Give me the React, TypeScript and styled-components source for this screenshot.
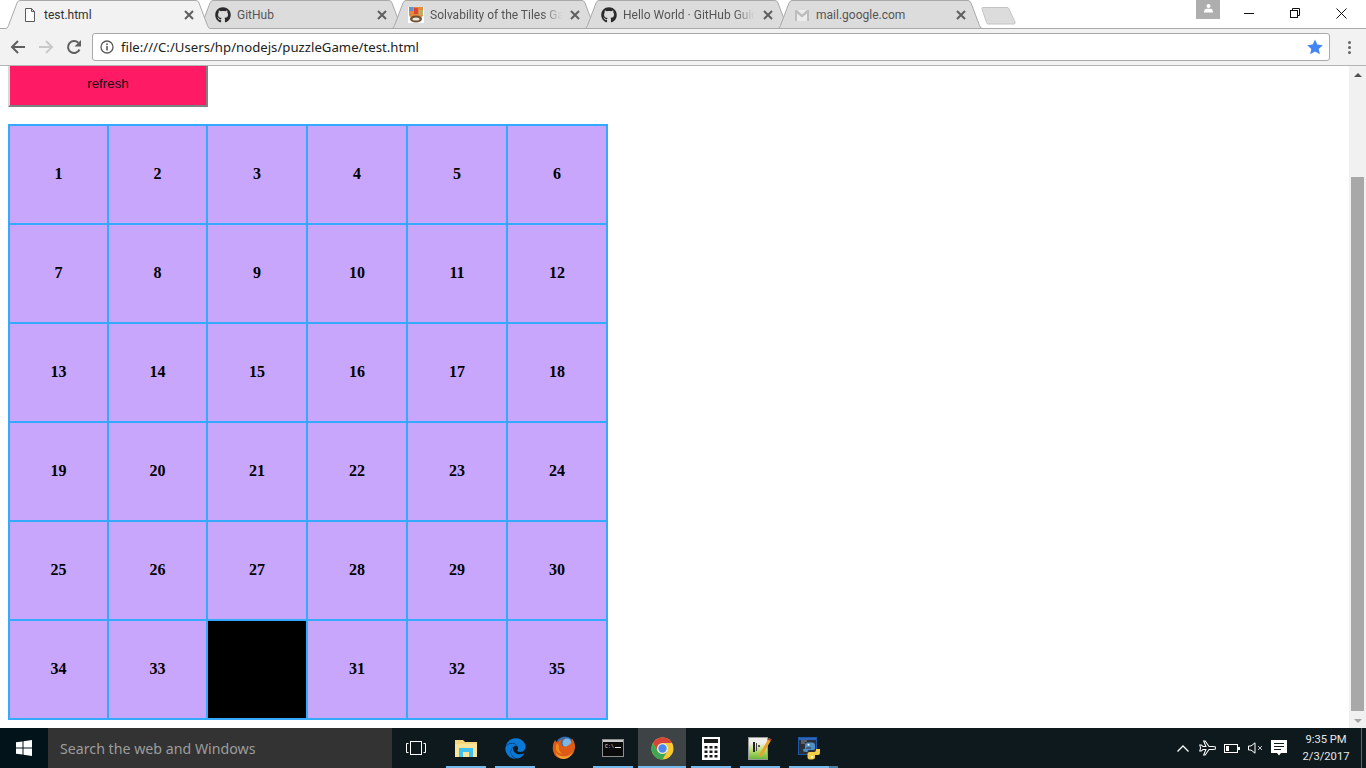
import React from "react";
import styled, { createGlobalStyle } from "styled-components";
import { FaGithub, FaEdge } from "react-icons/fa";

const Global = createGlobalStyle`
  html, body { margin: 0; padding: 0; height: 100%; overflow: hidden; background: #fff; }
  #root { height: 100%; }
`;

const UI = `"Noto Sans", "Open Sans", sans-serif`;
const UI_SMALL = `Roboto, "Noto Sans", sans-serif`;

const Page = styled.div`
  width: 1366px;
  height: 768px;
  display: flex;
  flex-direction: column;
  overflow: hidden;
  background: #fff;
`;

/* ---------- tab strip ---------- */
const TabStrip = styled.div`
  height: 29px;
  box-sizing: border-box;
  border-bottom: 1px solid #a9a9a9;
  display: flex;
  padding-left: 6px;
  background: #fff;
`;
const TabShape = styled.svg`
  position: absolute;
  left: 0;
  top: 0;
  width: 204px;
  height: 29px;
`;
const TabBox = styled.div<{ $active?: boolean }>`
  position: relative;
  z-index: ${(p) => (p.$active ? 2 : 1)};
  width: 204px;
  height: 28px;
  flex: none;
  margin-right: -11px;
  display: flex;
  align-items: center;
  padding-left: 16px;
  box-sizing: border-box;
  font: 12px/16px ${UI_SMALL};
  color: ${(p) => (p.$active ? "#2f2f2f" : "#555")};
`;
const TabIcon = styled.span`
  position: relative;
  width: 16px;
  height: 16px;
  flex: none;
  display: flex;
  margin-right: 6px;
  margin-top: 2px;
`;
const TabTitle = styled.span<{ $fade?: boolean }>`
  position: relative;
  width: 132px;
  flex: none;
  white-space: nowrap;
  overflow: hidden;
  margin-top: 2px;
  ${(p) =>
    p.$fade
      ? "-webkit-mask-image: linear-gradient(to right, #000 112px, transparent 132px); mask-image: linear-gradient(to right, #000 112px, transparent 132px);"
      : ""}
`;
const TabClose = styled.svg`
  position: relative;
  margin-left: 8px;
  margin-top: 2px;
  width: 10px;
  height: 10px;
  flex: none;
`;
const NewTab = styled.svg`
  margin-left: 10px;
  margin-top: 7px;
  width: 35px;
  height: 18px;
  flex: none;
`;
const WindowControls = styled.div`
  margin-left: auto;
  display: flex;
  align-items: flex-start;
  height: 28px;
  padding-right: 2px;
`;
const Avatar = styled.div`
  width: 24px;
  height: 19px;
  background: #aeaeae;
  display: flex;
  justify-content: center;
  margin-right: 6px;
`;
const WinBtn = styled.div`
  width: 46px;
  height: 26px;
  display: flex;
  align-items: center;
  justify-content: center;
`;

/* ---------- toolbar ---------- */
const Toolbar = styled.div`
  height: 36px;
  box-sizing: content-box;
  border-bottom: 1px solid #b4b4b4;
  background: #f2f2f2;
  display: flex;
  align-items: center;
  padding-left: 4px;
`;
const NavBtn = styled.div`
  width: 28px;
  height: 28px;
  display: flex;
  align-items: center;
  justify-content: center;
  flex: none;
`;
const Omnibox = styled.div`
  flex: 1;
  height: 28px;
  margin-left: 4px;
  box-sizing: border-box;
  border: 1px solid #a9a9a9;
  border-radius: 3px;
  background: #fff;
  display: flex;
  align-items: center;
  padding: 0 6px 0 7px;
  font: 13.2px/18px ${UI};
  color: #222;
`;
const OmniText = styled.span`
  margin-left: 7px;
  flex: 1;
  white-space: nowrap;
`;
const MenuBtn = styled.div`
  width: 36px;
  flex: none;
  display: flex;
  flex-direction: column;
  align-items: center;
  gap: 2px;
  padding-left: 2px;
  box-sizing: border-box;
`;
const MenuDot = styled.i`
  width: 3px;
  height: 3px;
  border-radius: 50%;
  background: #666;
  display: block;
`;

/* ---------- page area ---------- */
const Viewport = styled.div`
  flex: 1;
  min-height: 0;
  display: flex;
  overflow: hidden;
`;
const Content = styled.div`
  flex: 1;
  padding-left: 8px;
  overflow: hidden;
`;
const RefreshButton = styled.button`
  display: block;
  width: 200px;
  height: 48px;
  margin: -7px 0 17px;
  padding: 0;
  box-sizing: border-box;
  border-width: 2px;
  border-style: solid;
  border-color: #d8d8d8 #808080 #808080 #d8d8d8;
  background: #ff1a66;
  color: #111;
  font: 13.33px "Liberation Sans", Arial, sans-serif;
`;
const Board = styled.div`
  width: 600px;
  height: 596px;
  box-sizing: border-box;
  border: 1px solid #33aaff;
  display: grid;
  grid-template-columns: 99px 99px 100px 100px 100px 100px;
  grid-template-rows: repeat(6, 99px);
`;
const Tile = styled.div<{ $empty?: boolean }>`
  box-sizing: border-box;
  border: 1px solid #33aaff;
  background: ${(p) => (p.$empty ? "#000" : "#c8a6fc")};
  display: flex;
  align-items: center;
  justify-content: center;
  padding-bottom: 1px;
  font: bold 16px "Liberation Serif", "Times New Roman", serif;
  color: #000;
`;
const Scrollbar = styled.div`
  width: 17px;
  flex: none;
  background: #f1f1f1;
  display: flex;
  flex-direction: column;
`;
const ScrollArrow = styled.div<{ $up?: boolean }>`
  height: 17px;
  flex: none;
  display: flex;
  align-items: center;
  justify-content: center;
  &::before {
    content: "";
    display: block;
    border-left: 4px solid transparent;
    border-right: 4px solid transparent;
    ${(p) =>
      p.$up
        ? "border-bottom: 4px solid #505050;"
        : "border-top: 4px solid #a3a3a3; margin-top: 2px;"}
  }
`;
const ScrollTrack = styled.div`
  flex: 1;
  padding: 94px 2px 0;
`;
const ScrollThumb = styled.div`
  height: 534px;
  background: #a8a8a8;
`;

/* ---------- taskbar ---------- */
const Taskbar = styled.div`
  height: 40px;
  flex: none;
  background: #0d191d;
  display: flex;
  align-items: stretch;
`;
const StartBtn = styled.div`
  width: 48px;
  flex: none;
  background: #02141a;
  display: flex;
  align-items: center;
  justify-content: center;
`;
const SearchBox = styled.div`
  width: 344px;
  flex: none;
  background: #333;
  box-sizing: border-box;
  padding-left: 12px;
  display: flex;
  align-items: center;
  font: 14.2px ${UI};
  color: #9c9c9c;
`;
const TaskView = styled.div`
  width: 50px;
  flex: none;
  display: flex;
  align-items: center;
  justify-content: center;
  padding-right: 2px;
  box-sizing: border-box;
`;
const Slot = styled.div<{ $running?: boolean; $active?: boolean; $stacked?: boolean }>`
  position: relative;
  width: 48px;
  margin-right: 1px;
  flex: none;
  display: flex;
  align-items: center;
  justify-content: center;
  background: ${(p) => (p.$active ? "#3e4446" : "transparent")};
  ${(p) =>
    p.$running
      ? `&::after {
        content: "";
        position: absolute;
        bottom: 0;
        height: 2px;
        left: ${p.$active ? "0" : "4px"};
        right: ${p.$active ? "0" : "4px"};
        background: #76b9ed;
      }`
      : ""}
  ${(p) =>
    p.$stacked
      ? `&::before {
        content: "";
        position: absolute;
        bottom: 0;
        height: 2px;
        left: 44px;
        width: 9px;
        background: #4a7fa5;
      }`
      : ""}
`;
const Tray = styled.div`
  margin-left: auto;
  display: flex;
  align-items: center;
`;
const TrayIcon = styled.div<{ $w: number }>`
  width: ${(p) => p.$w}px;
  flex: none;
  display: flex;
  align-items: center;
  justify-content: center;
`;
const Clock = styled.div`
  width: 68px;
  flex: none;
  text-align: center;
  font: 11.2px/17px ${UI_SMALL};
  color: #e8e8e8;
`;
const ShowDesktop = styled.div`
  width: 1px;
  height: 100%;
  background: #5d6568;
  margin: 0 4px 0 1px;
`;

/* ---------- drawings ---------- */
const CloseGlyph = () => (
  <TabClose viewBox="0 0 10 10">
    <path d="M1 1 L9 9 M9 1 L1 9" stroke="#5f5f5f" strokeWidth="2" />
  </TabClose>
);

const DocIcon = () => (
  <svg width="16" height="16" viewBox="0 0 16 16">
    <path d="M3.500 1.500 H9.500 L12.500 4.500 V14.500 H3.500 Z M9.500 1.500 V4.500 H12.500" fill="#fff" stroke="#5a5a5a" />
  </svg>
);

const CrestIcon = () => (
  <svg width="16" height="16" viewBox="0 0 16 16">
    <rect width="16" height="16" fill="#fff" />
    <path d="M1 0 H15 V8 Q15 11 8 11 Q1 11 1 8 Z" fill="#e58a3c" />
    <path d="M1 0 H5 V4 H1 Z" fill="#6a8fc7" />
    <path d="M6 1 H10 V7 H6 Z" fill="#d8473a" />
    <path d="M11 3 H15 V8 H11 Z" fill="#b5b06a" />
    <ellipse cx="8" cy="12" rx="6" ry="3.400" fill="#6d5236" />
    <ellipse cx="8" cy="12" rx="3.600" ry="1.600" fill="#efe7d5" />
  </svg>
);

const GmailIcon = () => (
  <svg width="16" height="16" viewBox="0 0 16 16">
    <rect x="1" y="3" width="14" height="11" fill="#ececec" />
    <path d="M1 3 H3 L8 7.500 L13 3 H15 V14 H13 V6.500 L8 10.500 L3 6.500 V14 H1 Z" fill="#bdbdbd" />
  </svg>
);

const TabItem: React.FC<{
  title: string;
  icon: React.ReactNode;
  active?: boolean;
  fade?: boolean;
}> = ({ title, icon, active, fade }) => (
  <TabBox $active={active}>
    <TabShape viewBox="0 0 204 29">
      <path
        d={
          active
            ? "M0 29 L0 28 Q1.500 28 2.500 25.500 L11 3 Q12 .5 14 .5 H190 Q192 .5 193 3 L201.500 25.500 Q202.500 28 204 28 V29 Z"
            : "M0 28 Q1.500 28 2.500 25.500 L11 3 Q12 .5 14 .5 H190 Q192 .5 193 3 L201.500 25.500 Q202.500 28 204 28 Z"
        }
        fill={active ? "#f2f2f2" : "#dcdcdc"}
      />
      <path
        d="M0 28.500 Q1.500 28.500 2.500 25.500 L11 3 Q12 .5 14 .5 H190 Q192 .5 193 3 L201.500 25.500 Q202.500 28.500 204 28.500"
        fill="none"
        stroke="#a9a9a9"
      />
    </TabShape>
    <TabIcon>{icon}</TabIcon>
    <TabTitle $fade={fade}>{title}</TabTitle>
    <CloseGlyph />
  </TabBox>
);

const Back = () => (
  <svg width="16" height="16" viewBox="0 0 16 16">
    <path d="M15 8 H2 M8 2 L2 8 L8 14" fill="none" stroke="#5f5f5f" strokeWidth="2" />
  </svg>
);
const Forward = () => (
  <svg width="16" height="16" viewBox="0 0 16 16">
    <path d="M1 8 H14 M8 2 L14 8 L8 14" fill="none" stroke="#c9c9c9" strokeWidth="2" />
  </svg>
);
const Reload = () => (
  <svg width="16" height="16" viewBox="0 0 16 16">
    <path d="M13.500 10.500 A6 6 0 1 1 12.300 3.800" fill="none" stroke="#5f5f5f" strokeWidth="2" />
    <path d="M15 1 V7.500 H8.500 Z" fill="#5f5f5f" />
  </svg>
);
const Info = () => (
  <svg width="14" height="14" viewBox="0 0 14 14">
    <circle cx="7" cy="7" r="6" fill="none" stroke="#5a5a5a" strokeWidth="1.300" />
    <rect x="6.200" y="6" width="1.600" height="4.500" fill="#5a5a5a" />
    <rect x="6.200" y="3.400" width="1.600" height="1.600" fill="#5a5a5a" />
  </svg>
);
const Star = () => (
  <svg width="16" height="16" viewBox="0 0 16 16">
    <polygon points="8,.5 10.300,5.600 15.800,6.200 11.700,9.900 12.900,15.300 8,12.500 3.100,15.300 4.300,9.900 .2,6.200 5.700,5.600" fill="#4285f4" />
  </svg>
);
const Person = () => (
  <svg width="9" height="9" viewBox="0 0 9 9" style={{ marginTop: 4 }}>
    <circle cx="4.500" cy="2" r="2" fill="#fff" />
    <path d="M0 8.500 Q0 5 2.500 4.800 H6.500 Q9 5 9 8.500 Z" fill="#fff" />
  </svg>
);

const WinLogo = () => (
  <svg width="16" height="16" viewBox="0 0 16 16">
    <path d="M0 2.300 L6.500 1.400 V7.500 H0 Z M7.500 1.200 L16 0 V7.500 H7.500 Z M0 8.500 H6.500 V14.600 L0 13.700 Z M7.500 8.500 H16 V16 L7.500 14.800 Z" fill="#fff" />
  </svg>
);
const TaskViewIcon = () => (
  <svg width="20" height="14" viewBox="0 0 20 14">
    <rect x="4.500" y=".5" width="11" height="13" fill="none" stroke="#fff" />
    <path d="M2.500 2.500 H.5 V11.500 H2.500 M17.500 2.500 H19.500 V11.500 H17.500" fill="none" stroke="#fff" />
  </svg>
);
const FolderIcon = () => (
  <svg width="22" height="18" viewBox="0 0 22 18">
    <path d="M0 1 H8 L10 3 H22 V18 H0 Z" fill="#f4d77c" />
    <rect y="5" width="22" height="13" fill="#f9e39a" />
    <path d="M4 9 H18 V18 H14 V13 H8 V18 H4 Z" fill="#3fc1f0" />
  </svg>
);
const FirefoxIcon = () => (
  <svg width="24" height="24" viewBox="0 0 24 24">
    <circle cx="13" cy="10" r="9.500" fill="#2f6fb3" />
    <circle cx="15" cy="7" r="4.500" fill="#7fb7e0" />
    <path
      d="M3 4 Q4 6 5.500 6.500 Q8 3 12 3 Q8 5 9 8 Q10 11 14 10.500 Q17 10 19 7 Q20.500 4.500 20 2.500 Q23.500 7 23 12 Q22 21 12 23 Q3 23 1 15 Q0 9 3 4 Z"
      fill="#dd5a17"
    />
    <path d="M3 15 Q5 20 12 20.500 Q18 20.500 21 15 Q19 22 12 23 Q5 23 3 15 Z" fill="#f2a12e" />
    <path d="M5 7 Q3 10 4 14 Q6 18 10 18 Q6 14 7 10 Z" fill="#f08a1d" />
  </svg>
);
const CmdIcon = () => (
  <svg width="22" height="18" viewBox="0 0 22 18">
    <rect x=".5" y=".5" width="21" height="17" fill="#0a0a0a" stroke="#8f8f8f" />
    <rect x="1" y="1" width="20" height="2" fill="#c8c8c8" />
    <text x="3" y="9" fontSize="5" fontFamily="Liberation Mono, monospace" fill="#e8e8e8">C:\</text>
    <rect x="13" y="8" width="6" height="1" fill="#e8e8e8" />
  </svg>
);
const ChromeIcon = () => (
  <svg width="23" height="23" viewBox="-11.500 -11.500 23 23">
    <circle r="11" fill="#f8c832" />
    <path d="M-9.530 -5.500 A11 11 0 0 1 9.530 -5.500 L0 -5.500 A5.500 5.500 0 0 0 -4.760 2.750 Z" fill="#d9433a" />
    <path d="M-9.530 -5.500 L-4.760 2.750 A5.500 5.500 0 0 0 4.760 2.750 L0 11 A11 11 0 0 1 -9.530 -5.500 Z" fill="#3da755" />
    <circle r="5.300" fill="#f4f4f4" />
    <circle r="4.200" fill="#4a87ee" />
  </svg>
);
const CalcIcon = () => (
  <svg width="18" height="23" viewBox="0 0 18 23">
    <rect width="18" height="23" fill="#fff" />
    <rect x="2" y="2" width="14" height="4" fill="#1a1a1a" />
    {[0, 1, 2].flatMap((r) =>
      [0, 1, 2].map((c) => (
        <rect key={`${r}-${c}`} x={2.5 + c * 5} y={9 + r * 4.5} width="3" height="2.500" fill="#1a1a1a" />
      ))
    )}
  </svg>
);
const NotepadIcon = () => (
  <svg width="24" height="24" viewBox="0 0 24 24">
    <defs>
      <linearGradient id="npp" x1="0" y1="0" x2="0" y2="1">
        <stop offset="0.250" stopColor="#eeeeea" />
        <stop offset="0.600" stopColor="#b9dc6c" />
        <stop offset="1" stopColor="#66b53a" />
      </linearGradient>
    </defs>
    <rect x=".5" y="1.500" width="19" height="22" fill="url(#npp)" stroke="#9a9a9a" />
    <rect x="5" y="6" width="2" height="10" fill="#222" />
    <rect x="8" y="7" width="1" height="8" fill="#444" />
    <rect x="10" y="9" width="2" height="2" fill="#555" />
    <path d="M21 2 L23.500 3.500 L14 20 L11 21.500 L11.500 18 Z" fill="#e9a32b" />
    <path d="M21 2 L23.500 3.500 L22.500 5 L20 3.500 Z" fill="#a8322a" />
  </svg>
);
const PythonIcon = () => (
  <svg width="23" height="23" viewBox="0 0 23 23">
    <rect x=".5" y=".5" width="18" height="17" fill="#2c2f35" stroke="#1f57a8" />
    <rect x="1" y="1" width="17" height="2" fill="#2a66c0" />
    <path d="M3 4 H9 M3 6 H7" stroke="#8a8f96" />
    <path d="M7 12 V8 Q7 5.500 10 5.500 H14 Q17 5.500 17 8 V11.500 Q17 13 15 13 H11 Q9.500 13 9.500 15 H7.500 Q5 15 5 13 Q5 11.500 7 11.500 H13 V10.500 H9" fill="#4f8fc4" />
    <circle cx="10.500" cy="7.800" r="1" fill="#fff" />
    <path d="M22 12 V15.500 Q22 18 20 18 H17 V20 Q17 22.500 14 22.500 H12 Q9.500 22.500 9.500 20 V16.500 Q9.500 15 11.500 15 H16 Q18 15 18 13 V12 H20 Q22 12 22 12 Z" fill="#f4cf47" />
    <circle cx="14" cy="20" r="1" fill="#fff" />
  </svg>
);
const Chevron = () => (
  <svg width="12" height="7" viewBox="0 0 12 7">
    <path d="M.5 6.500 L6 1 L11.500 6.500" fill="none" stroke="#fff" strokeWidth="1.300" />
  </svg>
);
const PlaneIcon = () => (
  <svg width="17" height="16" viewBox="0 0 22 20">
    <path d="M1 6 H3 L5 8 H9 L6 1 H8 L13 8 H18 Q22 8 22 10 Q22 12 18 12 H13 L8 19 H6 L9 12 H5 L3 14 H1 L2 10 Z" fill="none" stroke="#fff" strokeWidth="1.300" />
  </svg>
);
const BatteryIcon = () => (
  <svg width="16" height="9" viewBox="0 0 16 9">
    <rect x=".5" y=".5" width="13" height="8" fill="none" stroke="#fff" />
    <rect x="2" y="2" width="3" height="5" fill="#fff" />
    <rect x="14" y="3" width="2" height="3" fill="#fff" />
  </svg>
);
const VolumeIcon = () => (
  <svg width="15" height="12" viewBox="0 0 15 12">
    <path d="M.5 4 H3 L7 .8 V11.200 L3 8 H.5 Z" fill="none" stroke="#fff" />
    <path d="M10 4 L14 8 M14 4 L10 8" stroke="#c8c8c8" />
  </svg>
);
const NoteIcon = () => (
  <svg width="16" height="16" viewBox="0 0 16 16">
    <path d="M0 0 H16 V13 H10 L8 15.500 L6 13 H0 Z" fill="#fff" />
    <path d="M3 3.500 H13 M3 6.500 H13 M3 9.500 H10" stroke="#0d191d" />
  </svg>
);

const rows = [
  ["1", "2", "3", "4", "5", "6"],
  ["7", "8", "9", "10", "11", "12"],
  ["13", "14", "15", "16", "17", "18"],
  ["19", "20", "21", "22", "23", "24"],
  ["25", "26", "27", "28", "29", "30"],
  ["34", "33", "", "31", "32", "35"],
];

export default function App() {
  return (
    <Page>
      <Global />
      <TabStrip>
        <TabItem active title="test.html" icon={<DocIcon />} />
        <TabItem title="GitHub" icon={<FaGithub size={16} color="#2b2b2b" />} />
        <TabItem fade title="Solvability of the Tiles Game" icon={<CrestIcon />} />
        <TabItem fade title="Hello World · GitHub Guides" icon={<FaGithub size={16} color="#2b2b2b" />} />
        <TabItem title="mail.google.com" icon={<GmailIcon />} />
        <NewTab viewBox="0 0 35 18">
          <path d="M1 2 Q.5 .5 2 .5 H26 Q27.500 .5 28 2 L34 15 Q34.500 17 33 17 H7 Q6 17 5.500 15.500 Z" fill="#dcdcdc" stroke="#c4c4c4" />
        </NewTab>
        <WindowControls>
          <Avatar>
            <Person />
          </Avatar>
          <WinBtn>
            <svg width="10" height="1"><rect width="10" height="1" fill="#111" /></svg>
          </WinBtn>
          <WinBtn>
            <svg width="10" height="10" viewBox="0 0 10 10">
              <path d="M2.500 2.500 V.5 H9.500 V7.500 H7.500" fill="none" stroke="#111" />
              <rect x=".5" y="2.500" width="7" height="7" fill="#fff" stroke="#111" />
            </svg>
          </WinBtn>
          <WinBtn>
            <svg width="11" height="11" viewBox="0 0 11 11">
              <path d="M.5 .5 L10.500 10.500 M10.500 .5 L.5 10.500" stroke="#111" />
            </svg>
          </WinBtn>
        </WindowControls>
      </TabStrip>

      <Toolbar>
        <NavBtn><Back /></NavBtn>
        <NavBtn><Forward /></NavBtn>
        <NavBtn><Reload /></NavBtn>
        <Omnibox>
          <Info />
          <OmniText>file:///C:/Users/hp/nodejs/puzzleGame/test.html</OmniText>
          <Star />
        </Omnibox>
        <MenuBtn>
          <MenuDot />
          <MenuDot />
          <MenuDot />
        </MenuBtn>
      </Toolbar>

      <Viewport>
        <Content>
          <RefreshButton>refresh</RefreshButton>
          <Board>
            {rows.flat().map((n, i) => (
              <Tile key={i} $empty={n === ""}>{n}</Tile>
            ))}
          </Board>
        </Content>
        <Scrollbar>
          <ScrollArrow $up />
          <ScrollTrack>
            <ScrollThumb />
          </ScrollTrack>
          <ScrollArrow />
        </Scrollbar>
      </Viewport>

      <Taskbar>
        <StartBtn><WinLogo /></StartBtn>
        <SearchBox>Search the web and Windows</SearchBox>
        <TaskView><TaskViewIcon /></TaskView>
        <Slot $running><FolderIcon /></Slot>
        <Slot $running><FaEdge size={21} color="#0a78d6" /></Slot>
        <Slot><FirefoxIcon /></Slot>
        <Slot $running><CmdIcon /></Slot>
        <Slot $running $active><ChromeIcon /></Slot>
        <Slot $running><CalcIcon /></Slot>
        <Slot $running><NotepadIcon /></Slot>
        <Slot $running $stacked><PythonIcon /></Slot>
        <Tray>
          <TrayIcon $w={24}><Chevron /></TrayIcon>
          <TrayIcon $w={24}><PlaneIcon /></TrayIcon>
          <TrayIcon $w={25}><BatteryIcon /></TrayIcon>
          <TrayIcon $w={22}><VolumeIcon /></TrayIcon>
          <TrayIcon $w={26}><NoteIcon /></TrayIcon>
          <Clock>
            9:35 PM
            <br />
            2/3/2017
          </Clock>
          <ShowDesktop />
        </Tray>
      </Taskbar>
    </Page>
  );
}
